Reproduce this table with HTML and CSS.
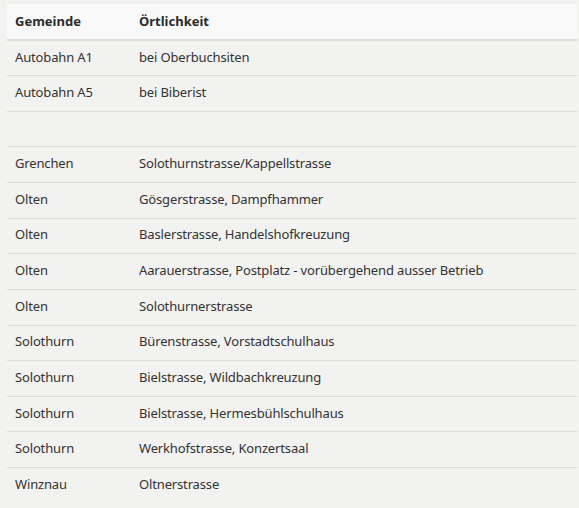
FILE: index.html
```html
<!DOCTYPE html>
<html lang="de">
<head>
<meta charset="utf-8">
<title>Standorte</title>
<link rel="stylesheet" href="styles.css">
</head>
<body>
<table class="tbl">
  <thead>
    <tr><th class="c1">Gemeinde</th><th>Örtlichkeit</th></tr>
  </thead>
  <tbody>
    <tr><td class="c1">Autobahn A1</td><td>bei Oberbuchsiten</td></tr>
    <tr><td class="c1">Autobahn A5</td><td>bei Biberist</td></tr>
    <tr class="empty"><td class="c1"></td><td></td></tr>
    <tr><td class="c1">Grenchen</td><td>Solothurnstrasse/Kappellstrasse</td></tr>
    <tr><td class="c1">Olten</td><td>Gösgerstrasse, Dampfhammer</td></tr>
    <tr><td class="c1">Olten</td><td>Baslerstrasse, Handelshofkreuzung</td></tr>
    <tr><td class="c1">Olten</td><td>Aarauerstrasse, Postplatz - vorübergehend ausser Betrieb</td></tr>
    <tr><td class="c1">Olten</td><td>Solothurnerstrasse</td></tr>
    <tr><td class="c1">Solothurn</td><td>Bürenstrasse, Vorstadtschulhaus</td></tr>
    <tr><td class="c1">Solothurn</td><td>Bielstrasse, Wildbachkreuzung</td></tr>
    <tr><td class="c1">Solothurn</td><td>Bielstrasse, Hermesbühlschulhaus</td></tr>
    <tr><td class="c1">Solothurn</td><td>Werkhofstrasse, Konzertsaal</td></tr>
    <tr class="last"><td class="c1">Winznau</td><td>Oltnerstrasse</td></tr>
  </tbody>
</table>
</body>
</html>
```
FILE: styles.css
```css
html, body {
  margin: 0;
  padding: 0;
  background: #f2f2f0;
}
body {
  padding: 4px 2px 0 7px;
  font-family: "Noto Sans", "Open Sans", sans-serif;
  font-size: 13px;
  color: #333;
}
.tbl {
  width: 570px;
  border-collapse: collapse;
}
.tbl th {
  background: #f9f9f9;
  text-align: left;
  font-weight: bold;
  color: #2a2a2a;
  height: 36px;
  padding: 0 8px 2px;
  border-bottom: 2px solid #dcdcdc;
  box-sizing: border-box;
}
.tbl th.c1, .tbl td.c1 {
  width: 124px;
}
.tbl td {
  height: 35.64px;
  padding: 0 8px 3px;
  border-bottom: 1px solid #dcdcdc;
  box-sizing: border-box;
  letter-spacing: -0.15px;
}
.tbl tr.last td {
  border-bottom: none;
}
```
